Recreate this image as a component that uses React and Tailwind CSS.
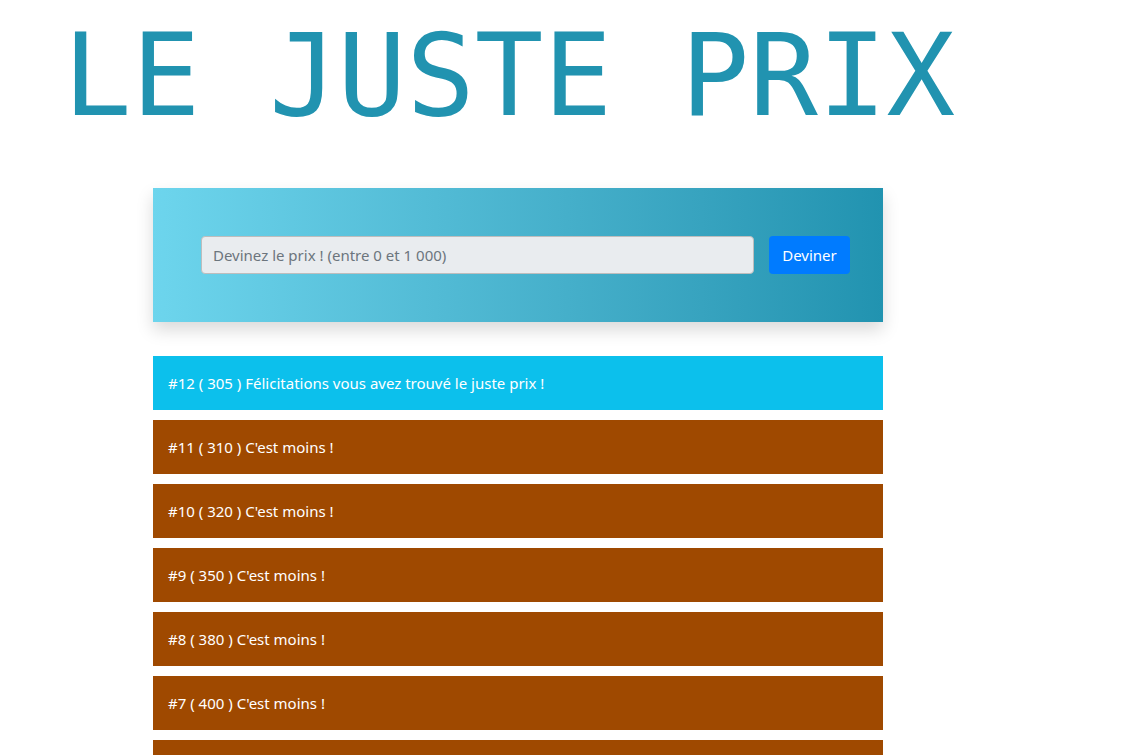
import { useState } from "react";

const guesses = [
  { id: 12, price: 305, message: "Félicitations vous avez trouvé le juste prix !", won: true },
  { id: 11, price: 310, message: "C'est moins !" },
  { id: 10, price: 320, message: "C'est moins !" },
  { id: 9, price: 350, message: "C'est moins !" },
  { id: 8, price: 380, message: "C'est moins !" },
  { id: 7, price: 400, message: "C'est moins !" },
];

function GuessForm() {
  const [value, setValue] = useState("");
  return (
    <form
      onSubmit={(event) => event.preventDefault()}
      className="flex gap-[15px] bg-linear-to-r from-[#6dd5ed] to-[#2193b0] py-12 pr-[33px] pl-12 shadow-[0_8px_16px_rgba(0,0,0,0.15)]"
    >
      <input
        type="text"
        aria-label="Devinez le prix"
        placeholder="Devinez le prix ! (entre 0 et 1 000)"
        value={value}
        onChange={(event) => setValue(event.target.value)}
        className="h-[38px] min-w-0 flex-1 rounded-sm border border-[#bdbdbd] bg-[#e9ecef] px-[11px] text-[#495057] placeholder:text-[#6c757d]"
      />
      <button type="submit" className="h-[38px] w-[81px] rounded-sm bg-[#007bff] text-white">
        Deviner
      </button>
    </form>
  );
}

function GuessRow({ guess }) {
  return (
    <li className={`flex min-h-[54px] items-center px-[15px] text-white ${guess.won ? "bg-[#0cc0ec]" : "bg-[#9f4900]"}`}>
      #{guess.id} ( {guess.price} ) {guess.message}
    </li>
  );
}

export default function App() {
  return (
    <div className="min-h-screen bg-white font-['Noto_Sans',sans-serif] text-[15px] leading-6">
      <h1 className="pt-[10px] pl-[63px] font-['DejaVu_Sans_Mono',monospace] text-[114px] leading-[132px] whitespace-nowrap text-[#2193b0]">
        LE JUSTE PRIX
      </h1>
      <main className="mt-[46px] mr-[242px] ml-[153px]">
        <GuessForm />
        <ul className="mt-[34px] flex flex-col gap-[10px]">
          {guesses.map((guess) => (
            <GuessRow key={guess.id} guess={guess} />
          ))}
          <li className="min-h-[54px] bg-[#9f4900]" />
        </ul>
      </main>
    </div>
  );
}
